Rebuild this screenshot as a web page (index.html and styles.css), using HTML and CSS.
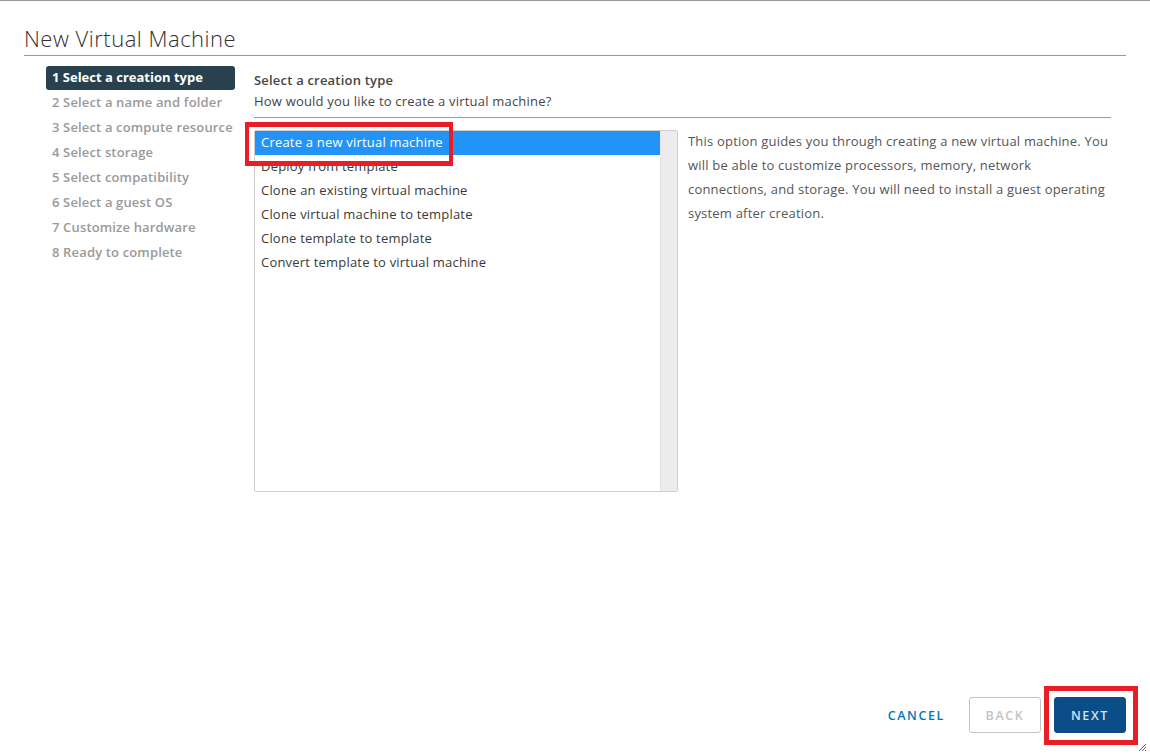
FILE: index.html
```html
<!DOCTYPE html>
<html lang="en">
<head>
<meta charset="utf-8">
<title>New Virtual Machine</title>
<link rel="stylesheet" href="styles.css">
</head>
<body>
<div class="dialog">
  <h1 class="title">New Virtual Machine</h1>
  <div class="main">
    <ul class="steps">
      <li class="step active">1 Select a creation type</li>
      <li class="step">2 Select a name and folder</li>
      <li class="step">3 Select a compute resource</li>
      <li class="step">4 Select storage</li>
      <li class="step">5 Select compatibility</li>
      <li class="step">6 Select a guest OS</li>
      <li class="step">7 Customize hardware</li>
      <li class="step">8 Ready to complete</li>
    </ul>
    <div class="content">
      <div class="head">
        <div class="head-title">Select a creation type</div>
        <div class="head-sub">How would you like to create a virtual machine?</div>
      </div>
      <div class="body">
        <div class="listbox">
          <ul class="options">
            <li class="option selected">Create a new virtual machine</li>
            <li class="option">Deploy from template</li>
            <li class="option">Clone an existing virtual machine</li>
            <li class="option">Clone virtual machine to template</li>
            <li class="option">Clone template to template</li>
            <li class="option">Convert template to virtual machine</li>
          </ul>
          <div class="scrolltrack"></div>
        </div>
        <p class="desc">This option guides you through creating a new virtual machine. You will be able to customize processors, memory, network connections, and storage. You will need to install a guest operating system after creation.</p>
      </div>
    </div>
  </div>
  <div class="footer">
    <button class="btn btn-link">CANCEL</button>
    <button class="btn btn-outline" disabled>BACK</button>
    <button class="btn btn-primary">NEXT</button>
  </div>
</div>
<div class="mark mark-option"></div>
<div class="mark mark-next"></div>
<svg class="resize" width="10" height="10" viewBox="0 0 10 10">
  <path d="M9 2 L2 9 M9 5 L5 9 M9 8 L8 9" stroke="#666" stroke-width="1" fill="none"/>
</svg>
</body>
</html>
```

FILE: styles.css
```css
* { box-sizing: border-box; }
html, body { margin: 0; padding: 0; }
body {
  width: 1150px;
  height: 755px;
  overflow: hidden;
  background: #fff;
  font-family: "Open Sans", "Liberation Sans", sans-serif;
  color: #454545;
  position: relative;
}
.dialog {
  height: 755px;
  border-top: 1px solid #9a9a9a;
  padding: 0 24px 22px 24px;
  display: flex;
  flex-direction: column;
}
.title {
  margin: 22px 0 0 0;
  font-size: 22px;
  line-height: 30px;
  font-weight: 300;
  color: #313131;
  padding-bottom: 2px;
  border-bottom: 1px solid #9a9a9a;
  letter-spacing: 0.5px;
}
.main {
  flex: 1;
  display: flex;
  padding-top: 10px;
}
.steps {
  list-style: none;
  margin: 0 0 0 22px;
  padding: 0;
  width: 189px;
  flex: none;
}
.step {
  height: 24px;
  line-height: 22px;
  padding-bottom: 2px;
  margin-bottom: 1px;
  padding-left: 6px;
  font-size: 13px;
  font-weight: 600;
  color: #9a9a9a;
  white-space: nowrap;
  border-radius: 3px;
  letter-spacing: 0.15px;
}
.step.active {
  background: #29414e;
  color: #fff;
  font-weight: 700;
  letter-spacing: 0;
}
.content {
  flex: 1;
  margin-left: 19px;
  margin-right: 15px;
}
.head {
  border-bottom: 1px solid #9a9a9a;
  padding-top: 4px;
  padding-bottom: 5px;
  letter-spacing: 0.2px;
}
.head-title {
  font-size: 13px;
  line-height: 20px;
  font-weight: 600;
  color: #454545;
}
.head-sub {
  font-size: 13px;
  line-height: 22px;
  color: #454545;
}
.body {
  display: flex;
  margin-top: 12px;
}
.listbox {
  width: 424px;
  height: 362px;
  border: 1px solid #cfcfcf;
  border-radius: 2px;
  display: flex;
  flex: none;
}
.options {
  list-style: none;
  margin: 0;
  padding: 0;
  flex: 1;
}
.option {
  height: 24px;
  line-height: 22px;
  padding-bottom: 2px;
  padding-left: 6px;
  font-size: 13px;
  letter-spacing: 0.2px;
  color: #3a3a3a;
}
.option.selected {
  background: #2393f8;
  color: #fff;
}
.scrolltrack {
  width: 17px;
  background: #ececec;
  border-left: 1px solid #e4e4e4;
}
.desc {
  margin: -1px 0 0 10px;
  font-size: 13px;
  letter-spacing: 0.2px;
  line-height: 24px;
  color: #565656;
}
.footer {
  display: flex;
  justify-content: flex-end;
  align-items: center;
  gap: 13px;
}
.btn {
  height: 36px;
  min-width: 72px;
  padding: 0 12px;
  border-radius: 3px;
  font-family: "Open Sans", "Liberation Sans", sans-serif;
  font-size: 12.5px;
  font-weight: 600;
  letter-spacing: 1.6px;
  background: transparent;
  border: 1px solid transparent;
}
.btn-link {
  color: #0079b8;
  margin-right: -2px;
}
.btn-outline {
  border-color: #c4c4c4;
  color: #c4c4c4;
}
.btn-primary {
  background: #0b4d87;
  border-color: #0b4d87;
  color: #d2e3f2;
}
.mark {
  position: absolute;
  border: 4px solid #e81d25;
}
.mark-option {
  left: 245px;
  top: 122px;
  width: 208px;
  height: 44px;
  border-width: 5px 4px;
}
.mark-next {
  left: 1044px;
  top: 686px;
  width: 94px;
  height: 59px;
  border-width: 5px;
}
.resize {
  position: absolute;
  right: 3px;
  bottom: 3px;
}
```
